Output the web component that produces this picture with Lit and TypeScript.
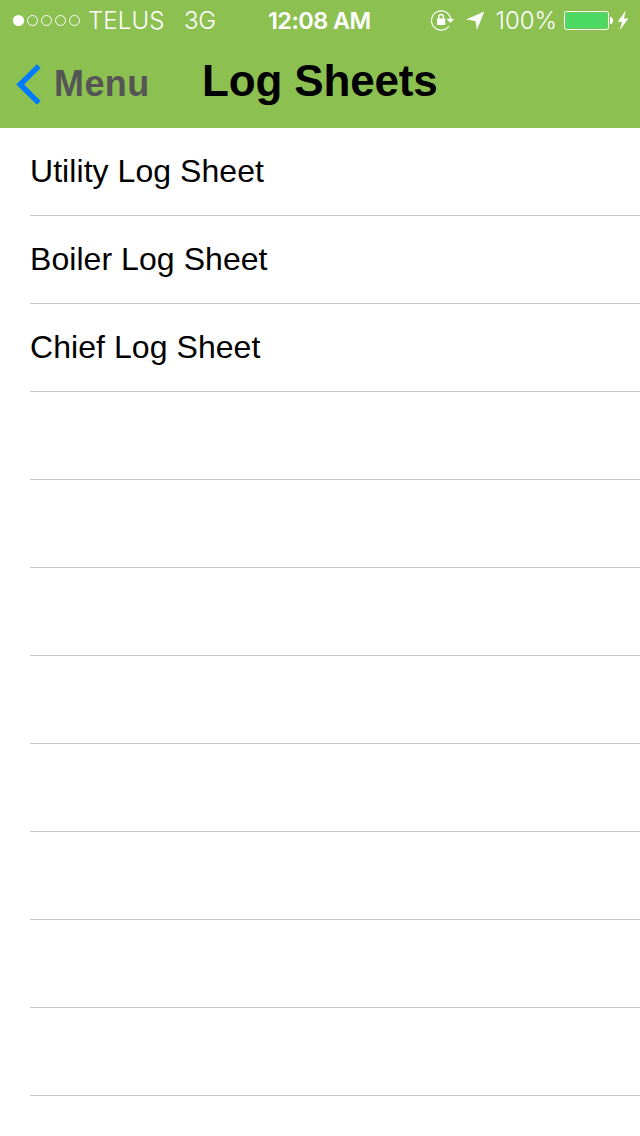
import { LitElement, html, css, svg } from "lit";
import { customElement } from "lit/decorators.js";

@customElement("status-bar")
class StatusBar extends LitElement {
  static styles = css`
    :host {
      display: grid;
      grid-template-columns: 268px 162px 1fr;
      height: 40px;
      color: #fff;
      font: 300 24px/42px Inter, "Liberation Sans", sans-serif;
      white-space: pre;
    }
    .group { display: flex; height: 40px; }
    svg { display: block; flex: none; }
    .carrier { width: 96px; letter-spacing: 0.1px; }
    .network { letter-spacing: -0.4px; }
    .time { font-weight: 600; font-size: 23.5px; letter-spacing: -0.6px; }
    .percent { width: 67px; padding-left: 0.5px; box-sizing: border-box; letter-spacing: 0; }
  `;
  render() {
    return html`
      <div class="group">
        <svg width="88" height="40" viewBox="0 0 88 40">
          <circle cx="18.5" cy="20.5" r="5.6" fill="#fff" />
          ${[32.5, 46.5, 60.5, 74.5].map(
            (x) => svg`<circle cx=${x} cy="20.5" r="5" fill="none" stroke="#fff" stroke-width="1" />`
          )}
        </svg>
        <span class="carrier">TELUS</span>
        <span class="network">3G</span>
      </div>
      <span class="time">12:08 AM</span>
      <div class="group">
        <svg width="65" height="40" viewBox="430 0 65 40" fill="none">
          <path d="M450.6 19A9.6 9.6 0 1 0 449 26" stroke="#fff" stroke-width="1.2" />
          <path d="M446.4 18.8H454.3L450.4 23Z" fill="#fff" />
          <rect x="437" y="18.4" width="8.2" height="6.6" rx="0.4" fill="#fff" />
          <path d="M438.8 19V16.8a2.3 2.3 0 0 1 4.6 0V19" stroke="#fff" stroke-width="1.4" />
          <path d="M484.3 11.6L476.9 30L475.5 20.9L466 19.6Z" fill="#fff" />
        </svg>
        <span class="percent">100%</span>
        <svg width="78" height="40" viewBox="562 0 78 40">
          <rect x="564.5" y="11.5" width="44" height="18" rx="2" fill="none" stroke="#fff" />
          <rect x="565.5" y="12.5" width="42" height="16" rx="0.8" fill="#4cd964" />
          <path d="M610 17H611.2Q613 17.8 613 20.5T611.2 24H610Z" fill="#fff" />
          <path d="M625.6 10.6L617.8 21.8H622L619.8 30.2L628.4 18.4H624Z" fill="#fff" />
        </svg>
      </div>
    `;
  }
}

@customElement("nav-bar")
class NavBar extends LitElement {
  static styles = css`
    :host {
      display: grid;
      grid-template-columns: 202px 1fr;
      height: 88px;
      font-family: "Liberation Sans", Arial, sans-serif;
      font-weight: 700;
      white-space: nowrap;
    }
    .back { display: flex; color: #555; font-size: 36px; line-height: 87px; letter-spacing: 0.4px; }
    .back svg { width: 54px; height: 88px; flex: none; }
    .title { margin: 0; font-size: 44px; line-height: 82px; letter-spacing: -0.15px; color: #000; }
  `;
  render() {
    return html`
      <div class="back">
        <svg viewBox="0 40 54 88">
          <path d="M36.9 64.3L16.3 84.5L36.9 104.7L40.6 101.1L24.2 84.5L40.6 67.9Z" fill="#007aff" />
        </svg>
        <span>Menu</span>
      </div>
      <h1 class="title">Log Sheets</h1>
    `;
  }
}

@customElement("app-root")
class AppRoot extends LitElement {
  static styles = css`
    :host {
      display: block;
      height: 1136px;
      overflow: hidden;
      background: #fff;
      font-family: "Liberation Sans", Arial, sans-serif;
    }
    .header { background: #8cc152; height: 128px; }
    .list { margin: 0; padding: 0 0 0 30px; list-style: none; }
    .row {
      box-sizing: border-box;
      height: 88px;
      border-bottom: 1px solid #c8c7cc;
      font-size: 32px;
      line-height: 87px;
      letter-spacing: 0.06px;
      color: #000;
    }
  `;
  private rows = ["Utility Log Sheet", "Boiler Log Sheet", "Chief Log Sheet", ...Array(8).fill("")];
  render() {
    return html`
      <div class="header">
        <status-bar></status-bar>
        <nav-bar></nav-bar>
      </div>
      <ul class="list">
        ${this.rows.map((r) => html`<li class="row">${r}</li>`)}
      </ul>
    `;
  }
}
